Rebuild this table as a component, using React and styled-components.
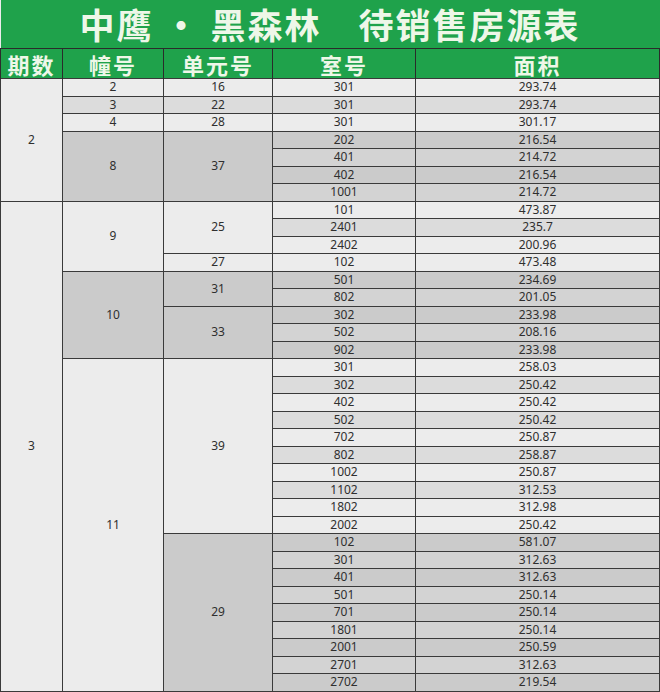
import React from "react";
import styled, {createGlobalStyle} from "styled-components";

const GlobalStyle = createGlobalStyle`
  html, body {
    margin: 0;
    padding: 0;
    background: #ececec;
  }
`;

const tones = {
    light: '#ececec',
    lightAlt: '#dcdcdc',
    dark: '#cbcbcb',
    darkAlt: '#d3d3d3'
}

const Sheet = styled.table`
  width: 660px;
  table-layout: fixed;
  border-collapse: collapse;
  font-family: "Noto Sans", "Noto Sans CJK SC", sans-serif;
  color: #2f2f2f;
`;

const Title = styled.th`
  height: 48px;
  padding: 0;
  background: #1fa24b;
  color: #eef7e8;
  font-family: "Noto Sans CJK SC", sans-serif;
  font-size: 35px;
  line-height: 46px;
  font-weight: 700;
  letter-spacing: 2px;
  text-align: center;
  border-bottom: 1px solid #2b2b2b;
  white-space: pre;
`;

const Head = styled.th`
  height: 29px;
  padding: 0;
  background: #1fa24b;
  color: #eef7e8;
  font-family: "Noto Sans CJK SC", sans-serif;
  font-size: 22px;
  font-weight: 700;
  letter-spacing: 2px;
  text-align: center;
  border-left: 1px solid #2b2b2b;
  border-right: 1px solid #2b2b2b;
  line-height: 26px;
  vertical-align: middle;
`;

const Cell = styled.td`
  height: 16.5px;
  padding: 0;
  font-size: 12px;
  line-height: 14px;
  text-align: center;
  background: ${p => tones[p.$tone]};
  border: 1px solid #3a3a3a;
  border-top-color: ${p => p.$soft ? '#8a8a8a' : '#3a3a3a'};
`;

const periods = [
    {no: '2', buildings: [
        {no: '2', tone: 'light', units: [{no: '16', rooms: [['301', '293.74']]}]},
        {no: '3', tone: 'lightAlt', units: [{no: '22', rooms: [['301', '293.74']]}]},
        {no: '4', tone: 'light', units: [{no: '28', rooms: [['301', '301.17']]}]},
        {no: '8', tone: 'dark', units: [{no: '37', rooms: [
            ['202', '216.54'], ['401', '214.72', 1], ['402', '216.54'], ['1001', '214.72', 1]
        ]}]}
    ]},
    {no: '3', buildings: [
        {no: '9', tone: 'light', units: [
            {no: '25', rooms: [['101', '473.87'], ['2401', '235.7', 1], ['2402', '200.96']]},
            {no: '27', rooms: [['102', '473.48']]}
        ]},
        {no: '10', tone: 'dark', units: [
            {no: '31', rooms: [['501', '234.69'], ['802', '201.05', 1]]},
            {no: '33', rooms: [['302', '233.98'], ['502', '208.16', 1], ['902', '233.98']]}
        ]},
        {no: '11', tone: 'light', units: [
            {no: '39', tone: 'light', rooms: [
                ['301', '258.03'], ['302', '250.42', 1], ['402', '250.42'], ['502', '250.42', 1],
                ['702', '250.87'], ['802', '258.87', 1], ['1002', '250.87'], ['1102', '312.53', 1],
                ['1802', '312.98'], ['2002', '250.42']
            ]},
            {no: '29', tone: 'dark', rooms: [
                ['102', '581.07'], ['301', '312.63', 1], ['401', '312.63'], ['501', '250.14', 1],
                ['701', '250.14'], ['1801', '250.14', 1], ['2001', '250.59'], ['2701', '312.63', 1],
                ['2702', '219.54']
            ]}
        ]}
    ]}
]

const count = list => list.reduce((n, u) => n + u.rooms.length, 0)

function buildRows() {
    const rows = [];
    periods.forEach(period => {
        const periodSpan = period.buildings.reduce((n, b) => n + count(b.units), 0);
        period.buildings.forEach((b, bi) => {
            b.units.forEach((u, ui) => {
                const unitTone = u.tone || b.tone;
                u.rooms.forEach(([room, area, alt], ri) => {
                    const base = unitTone.startsWith('dark') ? 'dark' : 'light';
                    const rowTone = unitTone.endsWith('Alt') ? unitTone : (alt ? base + 'Alt' : base);
                    const soft = ri > 0;
                    rows.push(
                        <tr key={rows.length}>
                            {bi === 0 && ui === 0 && ri === 0 &&
                                <Cell rowSpan={periodSpan} $tone="light">{period.no}</Cell>}
                            {ui === 0 && ri === 0 &&
                                <Cell rowSpan={count(b.units)} $tone={b.tone}>{b.no}</Cell>}
                            {ri === 0 &&
                                <Cell rowSpan={u.rooms.length} $tone={unitTone}>{u.no}</Cell>}
                            <Cell $tone={rowTone} $soft={soft}>{room}</Cell>
                            <Cell $tone={rowTone} $soft={soft}>{area}</Cell>
                        </tr>
                    );
                });
            });
        });
    });
    return rows;
}

export default function App() {
    return (
        <>
            <GlobalStyle/>
            <Sheet>
                <colgroup>
                    <col style={{width: '62px'}}/>
                    <col style={{width: '101px'}}/>
                    <col style={{width: '109px'}}/>
                    <col style={{width: '143px'}}/>
                    <col/>
                </colgroup>
                <thead>
                    <tr><Title colSpan={5}>{'中鹰 · 黑森林　待销售房源表'}</Title></tr>
                    <tr>
                        <Head>期数</Head>
                        <Head>幢号</Head>
                        <Head>单元号</Head>
                        <Head>室号</Head>
                        <Head>面积</Head>
                    </tr>
                </thead>
                <tbody>{buildRows()}</tbody>
            </Sheet>
        </>
    )
}
